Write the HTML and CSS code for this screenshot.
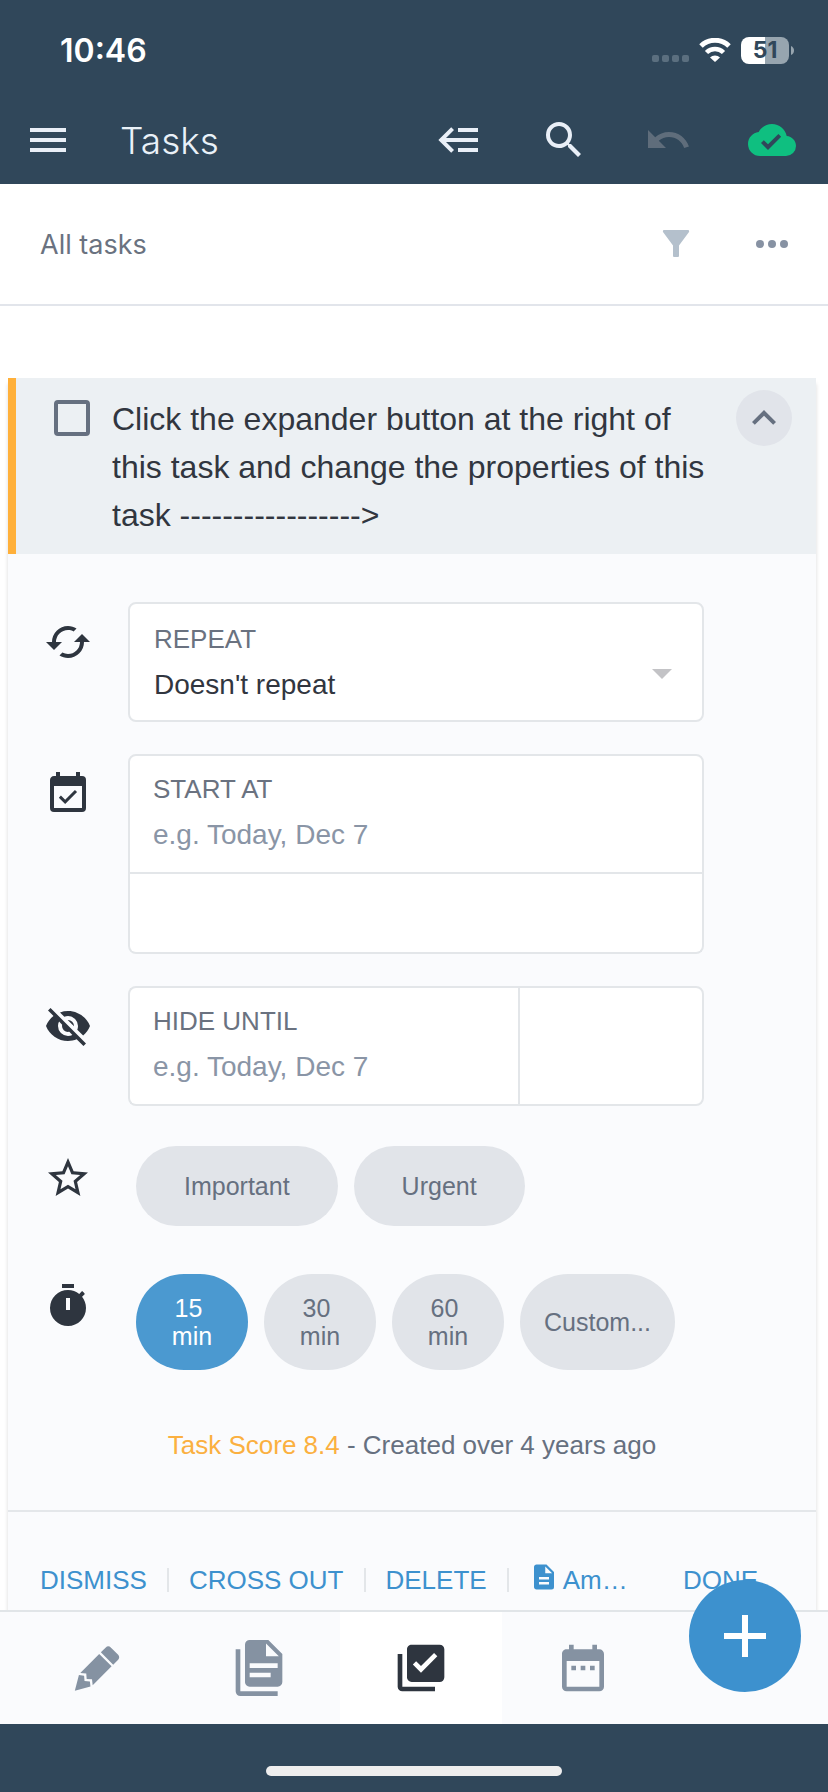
FILE: index.html
```
<!DOCTYPE html>
<html lang="en">
<head>
    <meta charset="UTF-8">
    <meta name="viewport" content="width=device-width, initial-scale=1.0">
    <title>Tasks</title>
    <link rel="stylesheet" href="styles.css">
</head>
<body>
    <header class="header">
        <div class="status-bar">
            <span class="time">10:46</span>
            <div class="status-icons">
                <svg class="signal" width="37" height="7" viewBox="0 0 37 7">
                    <rect x="0" width="7" height="7" rx="2"/>
                    <rect x="10" width="7" height="7" rx="2"/>
                    <rect x="20" width="7" height="7" rx="2"/>
                    <rect x="30" width="7" height="7" rx="2"/>
                </svg>
                <svg class="wifi" width="32" height="24" viewBox="0 0 32 24">
                    <path d="M2 8A20 20 0 0 1 30 8" fill="none" stroke="#fff" stroke-width="5"/>
                    <path d="M7.500 14.500A12 12 0 0 1 24.500 14.500" fill="none" stroke="#fff" stroke-width="4.500"/>
                    <path d="M16 24L11 19.500A7 7 0 0 1 21 19.500Z" fill="#fff"/>
                </svg>
                <div class="battery">
                    <span class="battery-level">51</span>
                    <svg width="3" height="9" viewBox="0 0 3 9"><path d="M0 0Q3 1.500 3 4.500T0 9Z" fill="#97a5af"/></svg>
                </div>
            </div>
        </div>
        <div class="toolbar">
            <button class="icon-btn" aria-label="Menu">
                <svg viewBox="0 0 24 24"><path d="M3,6H21V8H3V6M3,11H21V13H3V11M3,16H21V18H3V16Z"/></svg>
            </button>
            <h1>Tasks</h1>
            <div class="toolbar-actions">
                <button class="icon-btn" aria-label="Open sidebar">
                    <svg viewBox="0 0 24 24"><path d="M5,13L9,17L7.6,18.42L1.18,12L7.6,5.58L9,7L5,11H21V13H5M21,6V8H11V6H21M21,16V18H11V16H21Z"/></svg>
                </button>
                <button class="icon-btn" aria-label="Search">
                    <svg viewBox="0 0 24 24"><path d="M9.5,3A6.5,6.5 0 0,1 16,9.5C16,11.11 15.41,12.59 14.44,13.73L14.71,14H15.5L20.5,19L19,20.5L14,15.5V14.71L13.73,14.44C12.59,15.41 11.11,16 9.5,16A6.5,6.5 0 0,1 3,9.5A6.5,6.5 0 0,1 9.5,3M9.5,5C7,5 5,7 5,9.5C5,12 7,14 9.5,14C12,14 14,12 14,9.5C14,7 12,5 9.5,5Z"/></svg>
                </button>
                <button class="icon-btn undo" aria-label="Undo">
                    <svg viewBox="0 0 24 24"><path d="M12.5,8C9.85,8 7.45,9 5.6,10.6L2,7V16H11L7.38,12.38C8.77,11.22 10.54,10.5 12.5,10.5C16.04,10.5 19.05,12.81 20.1,16L22.47,15.22C21.08,11.03 17.15,8 12.5,8Z"/></svg>
                </button>
                <button class="icon-btn synced" aria-label="Synced">
                    <svg viewBox="0 0 24 24"><path fill-rule="evenodd" d="M10,17L6.5,13.5L7.91,12.08L10,14.17L15.18,9L16.59,10.41M19.35,10.03C18.67,6.59 15.64,4 12,4C9.11,4 6.6,5.64 5.35,8.03C2.34,8.36 0,10.9 0,14A6,6 0 0,0 6,20H19A5,5 0 0,0 24,15C24,12.36 21.95,10.22 19.35,10.03Z"/></svg>
                </button>
            </div>
        </div>
    </header>

    <div class="filter-bar">
        <span class="filter-name">All tasks</span>
        <button class="icon-btn filter" aria-label="Filter">
            <svg viewBox="0 0 48 48"><path d="M12 10H36Q37.500 10 37 12L27 25.500V36Q27 37 26 37H22Q21 37 21 36V25.500L11 12Q10.500 10 12 10Z"/></svg>
        </button>
        <button class="icon-btn more" aria-label="More">
            <svg viewBox="0 0 48 48"><circle cx="12" cy="24" r="4"/><circle cx="24" cy="24" r="4"/><circle cx="36" cy="24" r="4"/></svg>
        </button>
    </div>

    <main class="task-list">
        <article class="task">
            <div class="task-header">
                <input type="checkbox" id="task-done" class="task-check">
                <label for="task-done" class="task-title">Click the expander button at the right of this task and change the properties of this task -----------------&gt;</label>
                <button class="expander" aria-label="Collapse">
                    <svg viewBox="0 0 24 24"><path d="M7.41,15.41L12,10.83L16.59,15.41L18,14L12,8L6,14L7.41,15.41Z"/></svg>
                </button>
            </div>

            <form class="task-form">
                <div class="row">
                    <svg class="row-icon" viewBox="0 0 24 24"><path d="M19,8L15,12H18A6,6 0 0,1 12,18C11,18 10.03,17.75 9.2,17.3L7.74,18.76C8.97,19.54 10.43,20 12,20A8,8 0 0,0 20,12H23M6,12A6,6 0 0,1 12,6C13,6 13.97,6.25 14.8,6.7L16.26,5.24C15.03,4.46 13.57,4 12,4A8,8 0 0,0 4,12H1L5,16L9,12"/></svg>
                    <div class="field field-select">
                        <label for="repeat">REPEAT</label>
                        <div class="select-wrap">
                            <select id="repeat">
                                <option>Doesn't repeat</option>
                            </select>
                            <svg width="20" height="10" viewBox="0 0 20 10"><path d="M0 0H20L10 10Z" fill="#c3c3c6"/></svg>
                        </div>
                    </div>
                </div>

                <div class="row">
                    <svg class="row-icon" viewBox="0 0 24 24"><path d="M19,19H5V8H19M19,3H18V1H16V3H8V1H6V3H5C3.89,3 3,3.9 3,5V19A2,2 0 0,0 5,21H19A2,2 0 0,0 21,19V5A2,2 0 0,0 19,3M16.53,11.06L15.47,10L10.59,14.88L8.47,12.76L7.41,13.82L10.59,17L16.53,11.06Z"/></svg>
                    <div class="stacked">
                        <div class="field field-top">
                            <label for="start-at">START AT</label>
                            <input type="text" id="start-at" placeholder="e.g. Today, Dec 7">
                        </div>
                        <input type="text" class="time-input time-below" aria-label="Start time">
                    </div>
                </div>

                <div class="row">
                    <svg class="row-icon" viewBox="0 0 24 24"><path d="M11.83,9L15,12.16C15,12.11 15,12.05 15,12A3,3 0 0,0 12,9C11.94,9 11.89,9 11.83,9M7.53,9.8L9.08,11.35C9.03,11.56 9,11.77 9,12A3,3 0 0,0 12,15C12.22,15 12.44,14.97 12.65,14.92L14.2,16.47C13.53,16.8 12.79,17 12,17A5,5 0 0,1 7,12C7,11.21 7.2,10.47 7.53,9.8M2,4.27L4.28,6.55L4.73,7C3.08,8.3 1.78,10 1,12C2.73,16.39 7,19.5 12,19.5C13.55,19.5 15.03,19.2 16.38,18.66L16.81,19.08L19.73,22L21,20.73L3.27,3M12,7A5,5 0 0,1 17,12C17,12.64 16.87,13.26 16.64,13.82L19.57,16.75C21.07,15.5 22.27,13.86 23,12C21.27,7.61 17,4.5 12,4.5C10.6,4.5 9.26,4.75 8,5.2L10.17,7.35C10.74,7.13 11.35,7 12,7Z"/></svg>
                    <div class="split">
                        <div class="field field-left">
                            <label for="hide-until">HIDE UNTIL</label>
                            <input type="text" id="hide-until" placeholder="e.g. Today, Dec 7">
                        </div>
                        <input type="text" class="time-input time-right" aria-label="Hide until time">
                    </div>
                </div>

                <div class="row">
                    <svg class="row-icon" viewBox="0 0 24 24"><path d="M12,15.39L8.24,17.66L9.23,13.38L5.91,10.5L10.29,10.13L12,6.09L13.71,10.13L18.09,10.5L14.77,13.38L15.76,17.66M22,9.24L14.81,8.63L12,2L9.19,8.63L2,9.24L7.45,13.97L5.82,21L12,17.27L18.18,21L16.54,13.97L22,9.24Z"/></svg>
                    <div class="chips">
                        <button type="button" class="chip">Important</button>
                        <button type="button" class="chip">Urgent</button>
                    </div>
                </div>

                <div class="row">
                    <svg class="row-icon" viewBox="0 0 24 24"><path d="M19.03,7.39L20.45,5.97C20,5.46 19.55,5 19.04,4.56L17.62,6C16.07,4.74 14.12,4 12,4A9,9 0 0,0 3,13A9,9 0 0,0 12,22C17,22 21,17.97 21,13C21,10.88 20.26,8.93 19.03,7.39M13,14H11V8H13M15,1H9V3H15V1Z"/></svg>
                    <div class="chips">
                        <button type="button" class="chip duration selected">15 min</button>
                        <button type="button" class="chip duration">30 min</button>
                        <button type="button" class="chip duration">60 min</button>
                        <button type="button" class="chip custom">Custom...</button>
                    </div>
                </div>
            </form>

            <p class="task-info"><span class="score">Task Score 8.4</span> - Created over 4 years ago</p>

            <div class="task-actions">
                <button>DISMISS</button>
                <span class="sep"></span>
                <button>CROSS OUT</button>
                <span class="sep"></span>
                <button>DELETE</button>
                <span class="sep"></span>
                <button class="note-btn">
                    <svg viewBox="0 0 24 24"><path d="M13,9H18.5L13,3.5V9M6,2H14L20,8V20A2,2 0 0,1 18,22H6C4.89,22 4,21.1 4,20V4C4,2.89 4.89,2 6,2M16,18V16H8V18H16M16,14V12H8V14H16Z"/></svg>
                    Am…
                </button>
                <button class="done-btn">DONE</button>
            </div>
        </article>
    </main>

    <nav class="bottom-nav">
        <a href="#jots" aria-label="Jots">
            <svg viewBox="0 0 24 24"><path d="M16.84,2.73C16.45,2.73 16.07,2.88 15.77,3.17L13.65,5.29L18.95,10.6L21.07,8.5C21.67,7.89 21.67,6.94 21.07,6.36L17.9,3.17C17.6,2.88 17.22,2.73 16.84,2.73M12.94,6L4.84,14.11L7.4,14.39L7.58,16.68L9.86,16.85L10.15,19.41L18.25,11.3M4.25,15.04L2.5,21.73L9.2,19.94L8.96,17.78L6.65,17.61L6.47,15.29"/></svg>
        </a>
        <a href="#notes" aria-label="Notes">
            <svg viewBox="0 0 24 24"><path fill-rule="evenodd" d="M15,7H20.5L15,1.5V7M8,0H16L22,6V18A2,2 0 0,1 20,20H8C6.89,20 6,19.1 6,18V2A2,2 0 0,1 8,0M4,4V22H20V24H4A2,2 0 0,1 2,22V4H4M20,10H8V12H20V10M17,14H8V16H17V14Z"/></svg>
        </a>
        <a href="#tasks" class="active" aria-label="Tasks">
            <svg viewBox="0 0 24 24"><path fill-rule="evenodd" d="M22,16A2,2 0 0,1 20,18H8C6.89,18 6,17.1 6,16V4C6,2.89 6.89,2 8,2H20A2,2 0 0,1 22,4V16M18,20V22H4A2,2 0 0,1 2,20V6H4V20H18M12,14L19,7L17.59,5.59L12,11.17L9.91,9.09L8.5,10.5L12,14Z"/></svg>
        </a>
        <a href="#calendar" aria-label="Calendar">
            <svg viewBox="0 0 24 24"><path d="M9,11H7V13H9V11M13,11H11V13H13V11M17,11H15V13H17V11M19,4H18V2H16V4H8V2H6V4H5C3.89,4 3,4.9 3,6V20A2,2 0 0,0 5,22H19A2,2 0 0,0 21,20V6A2,2 0 0,0 19,4M19,20H5V9H19V20Z"/></svg>
        </a>
        <div class="fab-cell">
            <button class="fab" aria-label="Add task">
                <svg viewBox="0 0 42 42"><path d="M18 0H24V18H42V24H24V42H18V24H0V18H18Z"/></svg>
            </button>
        </div>
    </nav>
    <footer class="home-area"><div class="home-indicator"></div></footer>
</body>
</html>
```
FILE: styles.css
```
* {
    box-sizing: border-box;
}

body {
    margin: 0;
    min-height: 100vh;
    display: flex;
    flex-direction: column;
    font-family: "Liberation Sans", Arial, sans-serif;
    background-color: #ffffff;
    color: #31363f;
}

button {
    border: none;
    background: none;
    padding: 0;
    font-family: inherit;
    cursor: pointer;
}

svg {
    display: block;
    flex-shrink: 0;
}

/* Header */
.header {
    background-color: #30475a;
    color: #ffffff;
}

.status-bar {
    display: flex;
    justify-content: space-between;
    align-items: center;
    height: 96px;
    padding: 4px 34px 0 60px;
    font-family: Inter, sans-serif;
}

.time {
    font-size: 32px;
    font-weight: 600;
}

.status-icons {
    display: flex;
    align-items: center;
    gap: 10px;
}

.signal {
    fill: #5b6f7f;
    align-self: flex-end;
    margin-bottom: 2px;
}

.battery {
    display: flex;
    align-items: center;
    gap: 2px;
}

.battery-level {
    width: 48px;
    border-radius: 8px;
    background: linear-gradient(to right, #ffffff 50%, #97a5af 50%);
    color: #30475a;
    font-size: 23px;
    font-weight: 700;
    line-height: 27px;
    text-align: center;
}

.toolbar {
    display: flex;
    align-items: center;
    height: 88px;
    padding: 0 32px 0 24px;
}

.toolbar h1 {
    margin: 0 0 0 48px;
    font-family: Inter, sans-serif;
    font-size: 37px;
    font-weight: 300;
    color: #e9f1f8;
}

.toolbar-actions {
    display: flex;
    gap: 56px;
    margin-left: auto;
}

.icon-btn svg {
    width: 48px;
    height: 48px;
    fill: #e9eff7;
}

.icon-btn.undo svg {
    fill: #5f6d7b;
}

.icon-btn.synced svg {
    fill: #0fbf80;
}

/* Filter bar */
.filter-bar {
    display: flex;
    align-items: center;
    height: 122px;
    padding: 0 32px 0 40px;
    border-bottom: 2px solid #e2e5eb;
    gap: 48px;
}

.filter-name {
    flex: 1;
    font-family: Inter, sans-serif;
    font-size: 27px;
    color: #6a7280;
}

.icon-btn.filter svg {
    fill: #b4c0cc;
}

.icon-btn.more svg {
    fill: #8792a3;
}

/* Task card */
.task-list {
    flex: 1;
    display: flex;
    padding: 72px 12px 0 8px;
}

.task {
    flex: 1;
    background-color: #fafbfd;
    box-shadow: 0 6px 4px rgba(0, 0, 0, 0.15);
}

.task-header {
    display: flex;
    align-items: flex-start;
    padding: 12px 24px 20px 38px;
    border-left: 8px solid #ffb03a;
    background-color: #ecf0f3;
}

.task-check {
    appearance: none;
    flex-shrink: 0;
    width: 36px;
    height: 36px;
    margin: 10px 22px 0 0;
    border: 4px solid #667080;
    border-radius: 4px;
}

.task-title {
    flex: 1;
    padding-top: 5px;
    padding-right: 24px;
    margin-bottom: -5px;
    font-size: 32px;
    line-height: 48px;
}

.expander {
    display: flex;
    align-items: center;
    justify-content: center;
    width: 56px;
    height: 56px;
    border-radius: 50%;
    background-color: #e1e4ea;
}

.expander svg {
    width: 48px;
    height: 48px;
    fill: #667080;
}

/* Properties form */
.task-form {
    display: flex;
    flex-direction: column;
    gap: 32px;
    padding: 48px 112px 0 36px;
}

.row {
    display: grid;
    grid-template-columns: 48px 1fr;
    column-gap: 36px;
}

.row-icon {
    width: 48px;
    height: 48px;
    margin-top: 16px;
    fill: #2e353f;
}

.field {
    display: flex;
    flex-direction: column;
    gap: 14px;
    min-width: 0;
    height: 120px;
    padding: 17px 23px 0;
    border: 2px solid #e3e6e9;
    border-radius: 8px;
    background-color: #ffffff;
}

.field-select {
    padding: 19px 30px 0 24px;
}

.field label {
    font-size: 26px;
    line-height: 32px;
    color: #6a7280;
}

.field input,
.field select {
    width: 100%;
    height: 32px;
    padding: 0;
    border: none;
    outline: none;
    background: none;
    font-family: inherit;
    font-size: 28px;
    line-height: 32px;
    color: #31363f;
}

.field select {
    appearance: none;
}

.field input::placeholder {
    color: #8a95a6;
}

.select-wrap {
    display: flex;
    align-items: flex-start;
}

.time-input {
    border: 2px solid #e3e6e9;
    background-color: #ffffff;
    padding: 0 22px;
    font-size: 28px;
    min-width: 0;
}

.stacked {
    display: flex;
    flex-direction: column;
}

.field-top {
    border-radius: 8px 8px 0 0;
}

.time-below {
    height: 80px;
    border-top: none;
    border-radius: 0 0 8px 8px;
}

.split {
    display: grid;
    grid-template-columns: 21fr 10fr;
}

.field-left {
    border-right: none;
    border-radius: 8px 0 0 8px;
}

.time-right {
    border-radius: 0 8px 8px 0;
}

.chips {
    display: flex;
    gap: 16px;
    padding: 8px;
}

.chip {
    min-height: 80px;
    padding: 0 48px;
    border-radius: 48px;
    background-color: #e1e4e9;
    color: #667080;
    font-size: 25px;
    line-height: 28px;
}

.chip.duration {
    width: 112px;
    min-height: 96px;
    padding: 0 24px;
    white-space: break-spaces;
}

.chip.custom {
    padding: 0 24px;
}

.chip.selected {
    background-color: #4b99d0;
    color: #ffffff;
}

.task-info {
    margin: 0;
    padding: 48px 0 46px;
    border-bottom: 2px solid #e4e7ea;
    font-size: 26px;
    line-height: 38px;
    text-align: center;
    color: #667080;
}

.score {
    color: #fbb040;
}

.task-actions {
    display: flex;
    align-items: center;
    gap: 20px;
    padding: 52px 58px 14px 32px;
}

.task-actions button {
    font-size: 26px;
    line-height: 32px;
    color: #3d91ce;
}

.sep {
    width: 2px;
    height: 24px;
    background-color: #e3e6e9;
}

.note-btn {
    display: flex;
    gap: 4px;
}

.note-btn svg {
    width: 30px;
    height: 30px;
    margin-top: -2px;
    fill: #3d91ce;
}

.task-actions .done-btn {
    margin-left: auto;
}

/* Bottom navigation */
.bottom-nav {
    position: relative;
    display: grid;
    grid-template-columns: repeat(5, 1fr);
    height: 114px;
    padding: 0 2px 0 16px;
    border-top: 2px solid #e1e5e8;
    background-color: #fafbfd;
}

.bottom-nav a {
    display: flex;
    align-items: center;
    justify-content: center;
}

.bottom-nav a svg {
    width: 56px;
    height: 56px;
    fill: #8592a2;
}

.bottom-nav a.active {
    background-color: #ffffff;
}

.bottom-nav a.active svg {
    fill: #2e353f;
}

.fab-cell {
    position: relative;
}

/* Floating button sits over the card and the nav */
.fab {
    position: absolute;
    left: 50%;
    bottom: 32px;
    display: flex;
    align-items: center;
    justify-content: center;
    width: 112px;
    height: 112px;
    margin-left: -56px;
    border-radius: 50%;
    background-color: #3d91ce;
}

.fab svg {
    width: 42px;
    height: 42px;
    fill: #ffffff;
}

.home-area {
    display: flex;
    justify-content: center;
    align-items: flex-end;
    height: 68px;
    padding-bottom: 16px;
    background-color: #30475a;
}

.home-indicator {
    width: 296px;
    height: 10px;
    border-radius: 5px;
    background-color: #eeeeee;
}
```
